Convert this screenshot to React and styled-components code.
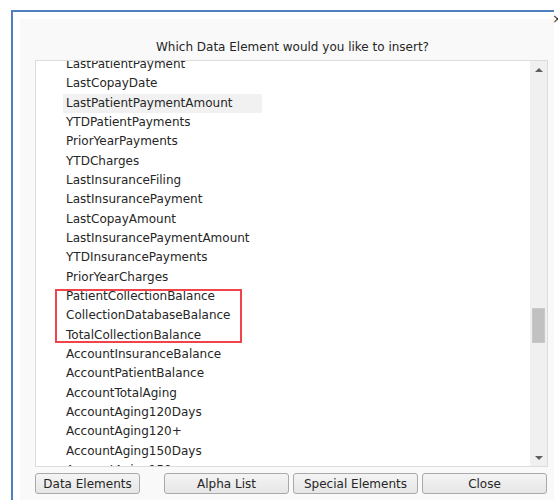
import React from "react";
import styled, { createGlobalStyle } from "styled-components";

const Global = createGlobalStyle`
  html, body { margin: 0; padding: 0; background: #ffffff; overflow: hidden; }
  body { font-family: "DejaVu Sans", Verdana, sans-serif; }
`;

const Page = styled.div`
  width: 558px;
  height: 500px;
  padding: 10px 0 0 11px;
  box-sizing: border-box;
  overflow: hidden;
`;

const Dialog = styled.div`
  position: relative;
  width: 543px;
  height: 490px;
  box-sizing: border-box;
  border-top: 2px solid #4f7fbd;
  border-left: 2px solid #4f7fbd;
  background: #ffffff;
  padding: 7px 0 0 7px;
`;

const CloseX = styled.span`
  position: absolute;
  top: 0px;
  right: -9px;
  font-size: 13px;
  line-height: 13px;
  color: #333;
  font-family: "DejaVu Sans", sans-serif;
`;

const Panel = styled.div`
  height: 100%;
  background: #f9f9f9;
  padding: 0 6px 0 15px;
  box-sizing: border-box;
  display: flex;
  flex-direction: column;
`;

const Title = styled.div`
  height: 41px;
  padding-top: 21px;
  box-sizing: border-box;
  text-align: center;
  font-size: 12px;
  line-height: 15px;
  color: #262626;
  padding-left: 2px;
`;

const ListBox = styled.div`
  position: relative;
  height: 407px;
  box-sizing: border-box;
  border: 1px solid #dcdcdc;
  background: #ffffff;
  display: flex;
`;

const Viewport = styled.div`
  flex: 1;
  overflow: hidden;
`;

const Rows = styled.ul`
  list-style: none;
  margin: -5.9px 0 0 27px;
  padding: 0;
`;

const Row = styled.li`
  width: 199px;
  height: 19.33px;
  line-height: 19.33px;
  padding-left: 3px;
  box-sizing: border-box;
  font-size: 12px;
  color: #262626;
  white-space: nowrap;
  background: ${(p) => (p.$hover ? "#f1f1f1" : "transparent")};
`;

const Scrollbar = styled.div`
  width: 17px;
  background: #f0f0f0;
  display: flex;
  flex-direction: column;
  align-items: center;
  position: relative;
`;

const Arrow = styled.div`
  width: 0;
  height: 0;
  border-left: 4px solid transparent;
  border-right: 4px solid transparent;
  ${(p) =>
    p.$down
      ? "border-top: 4px solid #606060; margin-top: auto; margin-bottom: 6px;"
      : "border-bottom: 4px solid #606060; margin-top: 7px;"}
`;

const Thumb = styled.div`
  position: absolute;
  left: 2px;
  width: 13px;
  height: 35px;
  background: #c1c1c1;
  border: 1px solid #c8c8c8;
  box-sizing: border-box;
`;

const Highlight = styled.div`
  position: absolute;
  left: 19px;
  top: 228px;
  width: 187px;
  height: 54px;
  border: 2px solid #f0444a;
  box-sizing: border-box;
  pointer-events: none;
`;

const ButtonRow = styled.div`
  display: flex;
  gap: 4px;
  margin-top: 6px;
`;

const Button = styled.button`
  width: ${(p) => p.$w}px;
  margin-right: ${(p) => p.$after || 0}px;
  height: 21px;
  box-sizing: border-box;
  border: 1px solid #a9a9a9;
  border-radius: 3px;
  background: linear-gradient(#f4f4f4, #e6e6e6);
  font-family: "DejaVu Sans", Verdana, sans-serif;
  font-size: 12px;
  color: #262626;
  padding: 0;
  line-height: 18px;
`;

const items = [
  "LastPatientPayment",
  "LastCopayDate",
  "LastPatientPaymentAmount",
  "YTDPatientPayments",
  "PriorYearPayments",
  "YTDCharges",
  "LastInsuranceFiling",
  "LastInsurancePayment",
  "LastCopayAmount",
  "LastInsurancePaymentAmount",
  "YTDInsurancePayments",
  "PriorYearCharges",
  "PatientCollectionBalance",
  "CollectionDatabaseBalance",
  "TotalCollectionBalance",
  "AccountInsuranceBalance",
  "AccountPatientBalance",
  "AccountTotalAging",
  "AccountAging120Days",
  "AccountAging120+",
  "AccountAging150Days",
  "AccountAging150+",
];

export default function App() {
  return (
    <>
      <Global />
      <Page>
        <Dialog>
          <CloseX>×</CloseX>
          <Panel>
            <Title>Which Data Element would you like to insert?</Title>
            <ListBox>
              <Viewport>
                <Rows>
                  {items.map((it) => (
                    <Row key={it} $hover={it === "LastPatientPaymentAmount"}>
                      {it}
                    </Row>
                  ))}
                </Rows>
              </Viewport>
              <Scrollbar>
                <Arrow />
                <Thumb style={{ top: 247 }} />
                <Arrow $down />
              </Scrollbar>
              <Highlight />
            </ListBox>
            <ButtonRow>
              <Button $w={105} $after={20}>Data Elements</Button>
              <Button $w={125}>Alpha List</Button>
              <Button $w={125}>Special Elements</Button>
              <Button $w={125}>Close</Button>
            </ButtonRow>
          </Panel>
        </Dialog>
      </Page>
    </>
  );
}
